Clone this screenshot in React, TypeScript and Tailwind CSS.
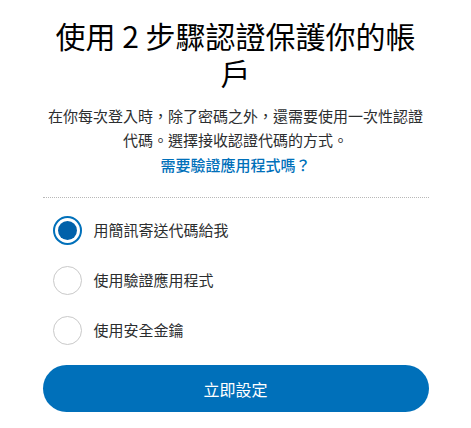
import React from "react";

const font = { fontFamily: '"Noto Sans CJK TC", "Noto Sans", sans-serif' };

function Radio({ checked, label }: { checked?: boolean; label: string }) {
  return (
    <label className="flex items-center h-[50px] cursor-pointer">
      <span
        className={
          checked
            ? "ml-[10px] w-[29px] h-[29px] rounded-full border-2 border-[#0070ba] flex items-center justify-center shrink-0"
            : "ml-[10px] w-[29px] h-[29px] rounded-full border border-[#c9c9c9] flex items-center justify-center shrink-0"
        }
      >
        {checked && <span className="w-[19px] h-[19px] rounded-full bg-[#0061aa]" />}
      </span>
      <span className="ml-[12px] text-[15px] leading-[20px] text-[#2c2e2f]">{label}</span>
    </label>
  );
}

export default function App() {
  return (
    <div className="w-[471px] h-[428px] bg-white flex justify-center" style={font}>
      <div className="w-[386px] flex flex-col">
        <h1 className="mt-[17px] text-center text-[30px] leading-[37px] font-normal text-[#000] px-[6px]">
          使用 2 步驟認證保護你的帳戶
        </h1>
        <p className="mt-[13px] text-center text-[15px] leading-[24px] text-[#2c2e2f]">
          在你每次登入時，除了密碼之外，還需要使用一次性認證代碼。選擇接收認證代碼的方式。
        </p>
        <a className="mt-[1px] text-center text-[15px] leading-[24px] font-medium text-[#0070ba]" href="#">
          需要驗證應用程式嗎？
        </a>
        <div className="mt-[20px] border-t border-dotted border-[#b8b8b8]" />
        <div className="mt-[7px] flex flex-col">
          <Radio checked label="用簡訊寄送代碼給我" />
          <Radio label="使用驗證應用程式" />
          <Radio label="使用安全金鑰" />
        </div>
        <button className="mt-[10px] h-[47px] w-full rounded-full bg-[#0070ba] text-white text-[16px]">
          立即設定
        </button>
      </div>
    </div>
  );
}
